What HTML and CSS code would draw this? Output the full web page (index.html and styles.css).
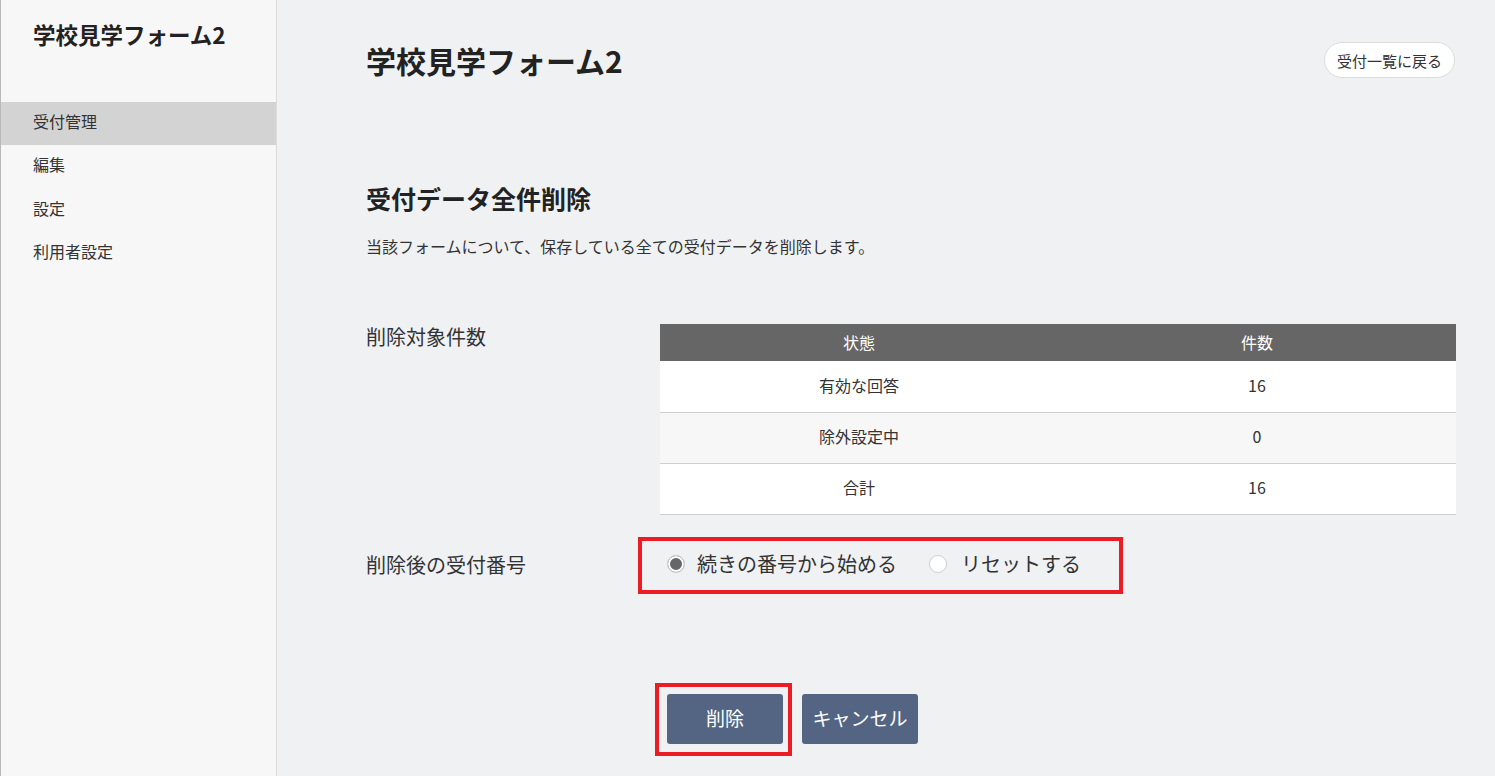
FILE: index.html
```html
<!DOCTYPE html>
<html lang="ja">
<head>
<meta charset="utf-8">
<title>学校見学フォーム2</title>
<link rel="stylesheet" href="styles.css">
</head>
<body>
<div class="app">
  <aside class="sidebar">
    <div class="side-title">学校見学フォーム2</div>
    <nav class="nav">
      <a class="nav-item active">受付管理</a>
      <a class="nav-item">編集</a>
      <a class="nav-item">設定</a>
      <a class="nav-item">利用者設定</a>
    </nav>
  </aside>
  <main class="main">
    <header class="page-head">
      <h1 class="page-title">学校見学フォーム2</h1>
      <button class="back-btn">受付一覧に戻る</button>
    </header>
    <h2 class="section-title">受付データ全件削除</h2>
    <p class="desc">当該フォームについて、保存している全ての受付データを削除します。</p>

    <div class="form-row row-table">
      <div class="label label-top">削除対象件数</div>
      <table class="count-table">
        <thead>
          <tr><th>状態</th><th>件数</th></tr>
        </thead>
        <tbody>
          <tr><td>有効な回答</td><td>16</td></tr>
          <tr class="alt"><td>除外設定中</td><td>0</td></tr>
          <tr><td>合計</td><td>16</td></tr>
        </tbody>
      </table>
    </div>

    <div class="form-row row-radio">
      <div class="label">削除後の受付番号</div>
      <div class="mark radio-box">
        <label class="radio-opt"><span class="radio checked"></span><span class="radio-text">続きの番号から始める</span></label>
        <label class="radio-opt opt2"><span class="radio"></span><span class="radio-text">リセットする</span></label>
      </div>
    </div>

    <div class="form-row row-buttons">
      <div></div>
      <div class="btns">
        <div class="mark btn-box"><button class="btn">削除</button></div>
        <button class="btn">キャンセル</button>
      </div>
    </div>
  </main>
</div>
</body>
</html>
```

FILE: styles.css
```css
* { box-sizing: border-box; }
html, body {
  margin: 0;
  padding: 0;
  height: 100%;
}
body {
  font-family: "Noto Sans CJK JP", "Noto Sans", sans-serif;
  color: #333;
  background: #f0f1f3;
}
.app {
  display: flex;
  min-height: 776px;
}
.sidebar {
  width: 277px;
  flex: none;
  background: #f7f7f7;
  border-left: 1px solid #b9b9b9;
  border-right: 1px solid #dcdcdc;
}
.side-title {
  font-size: 22.5px;
  font-weight: bold;
  color: #222;
  line-height: 34px;
  padding: 17px 0 0 32px;
  height: 102px;
}
.nav {
  display: flex;
  flex-direction: column;
}
.nav-item {
  display: block;
  height: 43.3px;
  line-height: 39px;
  padding-left: 32px;
  font-size: 16px;
  color: #333;
}
.nav-item.active {
  background: #d3d3d3;
}
.main {
  flex: 1;
  padding: 42px 39px 0 89px;
}
.page-head {
  display: flex;
  align-items: center;
  justify-content: space-between;
  height: 36px;
}
.page-title {
  margin: 0;
  font-size: 30px;
  font-weight: bold;
  color: #222;
  line-height: 36px;
}
.back-btn {
  font-family: inherit;
  font-size: 15px;
  color: #333;
  background: #fff;
  border: 1px solid #dcdcdc;
  border-radius: 18px;
  height: 36px;
  width: 131px;
  padding: 0;
  margin-right: 1px;
}
.section-title {
  margin: 101px 0 0;
  font-size: 25px;
  font-weight: bold;
  color: #222;
  line-height: 38px;
}
.desc {
  margin: 17px 0 0;
  font-size: 16px;
  line-height: 24px;
  color: #333;
}
.form-row {
  display: grid;
  grid-template-columns: 294px 1fr;
}
.row-table {
  margin-top: 66px;
}
.label {
  font-size: 20px;
  color: #333;
  line-height: 26px;
}
.count-table {
  width: 100%;
  border-collapse: collapse;
  table-layout: fixed;
  font-size: 16px;
}
.count-table th {
  background: #666;
  color: #fff;
  font-weight: normal;
  height: 37px;
  padding: 0 0 1px;
  text-align: center;
}
.count-table td {
  background: #fff;
  height: 51px;
  padding: 0 0 3px;
  text-align: center;
  border-bottom: 1px solid #cfcfcf;
  color: #333;
}
.count-table tr.alt td {
  background: #f7f7f7;
}
.row-radio {
  margin-top: 22px;
  align-items: center;
}
.mark {
  border: 4px solid #ec1c24;
}
.radio-box {
  display: inline-flex;
  align-items: center;
  justify-self: start;
  height: 57px;
  margin-left: -22px;
  padding: 0 38px 2px 25px;
}
.radio-opt {
  display: flex;
  align-items: center;
}
.opt2 {
  margin-left: 32px;
}
.radio {
  width: 18px;
  height: 18px;
  border-radius: 50%;
  border: 1px solid #cfcfcf;
  background: #fff;
  flex: none;
}
.radio.checked {
  background: #666;
  box-shadow: inset 0 0 0 2px #fff;
}
.radio-text {
  font-size: 20px;
  line-height: 26px;
  margin-left: 12px;
  color: #333;
}
.opt2 .radio-text {
  margin-left: 14px;
}
.row-buttons {
  margin-top: 89px;
}
.btns {
  display: flex;
  align-items: center;
  margin-left: -5px;
}
.btn-box {
  padding: 7px 5px 8px 8px;
  margin-right: 10px;
}
.btn {
  font-family: inherit;
  font-size: 19px;
  color: #fff;
  background: #536582;
  border: none;
  border-radius: 3px;
  width: 116px;
  height: 50px;
  padding: 0 0 3px;
  display: block;
}
```
